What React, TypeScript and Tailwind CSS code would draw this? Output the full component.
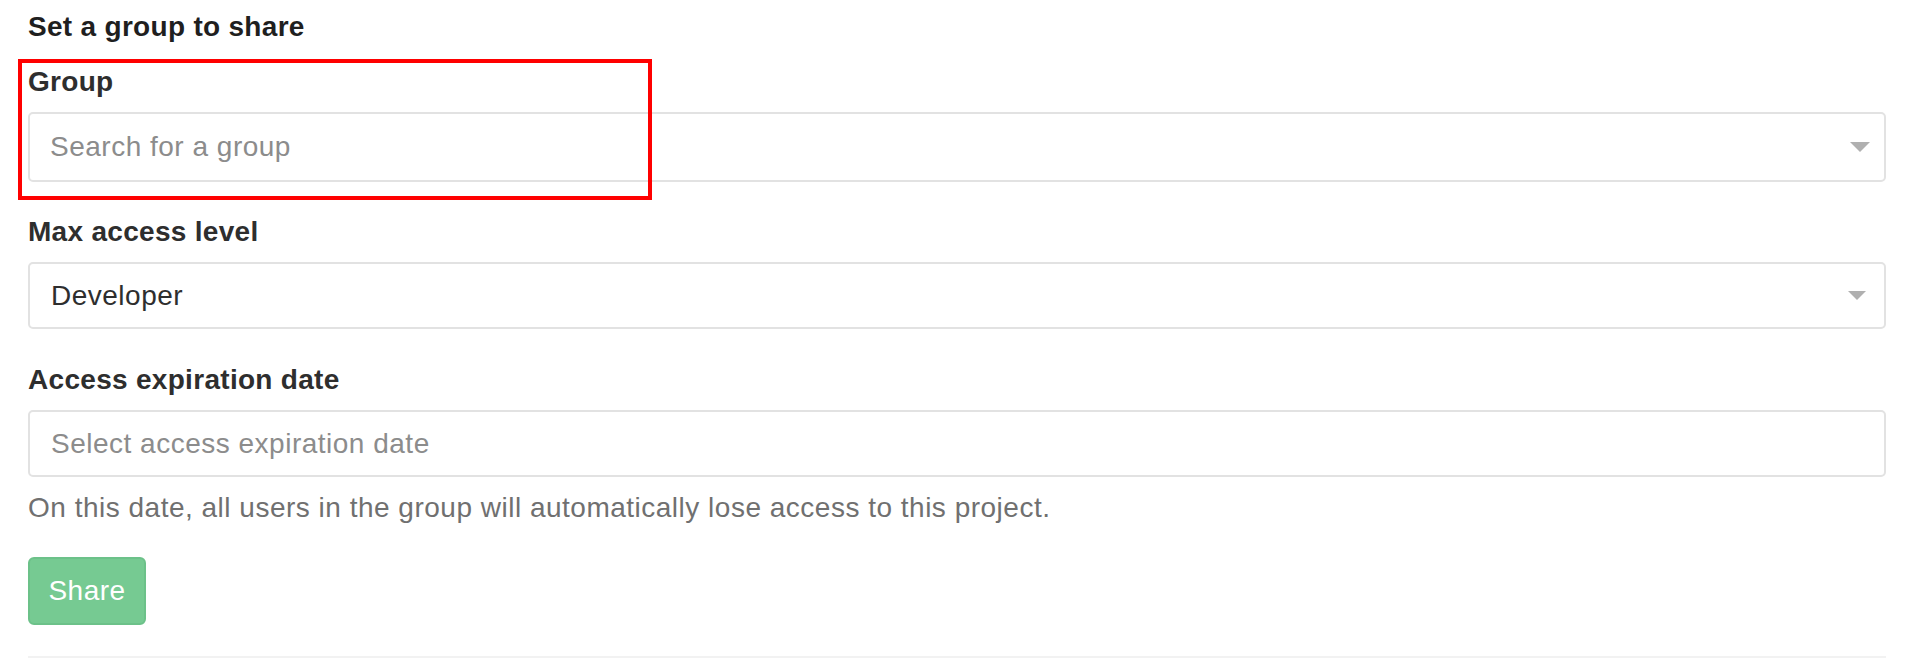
const font = { fontFamily: '"Liberation Sans", Arial, sans-serif' };

function Caret({ small }: { small?: boolean }) {
  return (
    <svg
      width={small ? 18 : 20}
      height={small ? 9 : 10}
      viewBox="0 0 20 10"
      className="shrink-0"
    >
      <path d="M0 0h20L10 10z" fill="#b0b0b0" />
    </svg>
  );
}

function Field({
  label,
  children,
}: {
  label: string;
  children: React.ReactNode;
}) {
  return (
    <div>
      <label className="block text-[28px] leading-[40px] font-bold tracking-[0.3px] text-[#2e2e2e] mb-[10px]">
        {label}
      </label>
      {children}
    </div>
  );
}

export default function App() {
  return (
    <div
      className="relative w-[1908px] h-[664px] bg-white pl-[28px] pr-[22px] pt-[7px] antialiased"
      style={font}
    >
      <h4 className="text-[28px] leading-[40px] font-bold tracking-[0.3px] text-[#1f1f1f]">
        Set a group to share
      </h4>

      <div className="mt-[15px]">
        <Field label="Group">
          <div className="flex h-[70px] items-center justify-between rounded-[5px] border-2 border-[#e2e2e2] pl-[20px] pr-[14px]">
            <span className="text-[28px] tracking-[0.5px] text-[#8c8c8c]">Search for a group</span>
            <Caret />
          </div>
        </Field>
      </div>

      <div className="mt-[30px]">
        <Field label="Max access level">
          <div className="flex h-[67px] items-center justify-between rounded-[5px] border-2 border-[#e2e2e2] pl-[21px] pr-[18px]">
            <span className="text-[28px] tracking-[0.5px] text-[#2e2e2e]">Developer</span>
            <Caret small />
          </div>
        </Field>
      </div>

      <div className="mt-[31px]">
        <Field label="Access expiration date">
          <div className="flex h-[67px] items-center rounded-[5px] border-2 border-[#e2e2e2] pl-[21px]">
            <span className="text-[28px] tracking-[0.5px] text-[#8c8c8c]">
              Select access expiration date
            </span>
          </div>
        </Field>
        <p className="mt-[11px] text-[28px] leading-[40px] tracking-[0.5px] text-[#707070]">
          On this date, all users in the group will automatically lose access to this project.
        </p>
      </div>

      <button className="mt-[29px] flex h-[68px] w-[118px] items-center justify-center rounded-[6px] border-2 border-[#6cc189] bg-[#76ca92] text-[28px] tracking-[0.5px] text-white">
        Share
      </button>

      <div className="mt-[31px] h-[2px] bg-[#f2f2f2]" />

      <div className="pointer-events-none absolute left-[18px] top-[59px] h-[141px] w-[634px] border-[4px] border-[#ff0000]" />
    </div>
  );
}
